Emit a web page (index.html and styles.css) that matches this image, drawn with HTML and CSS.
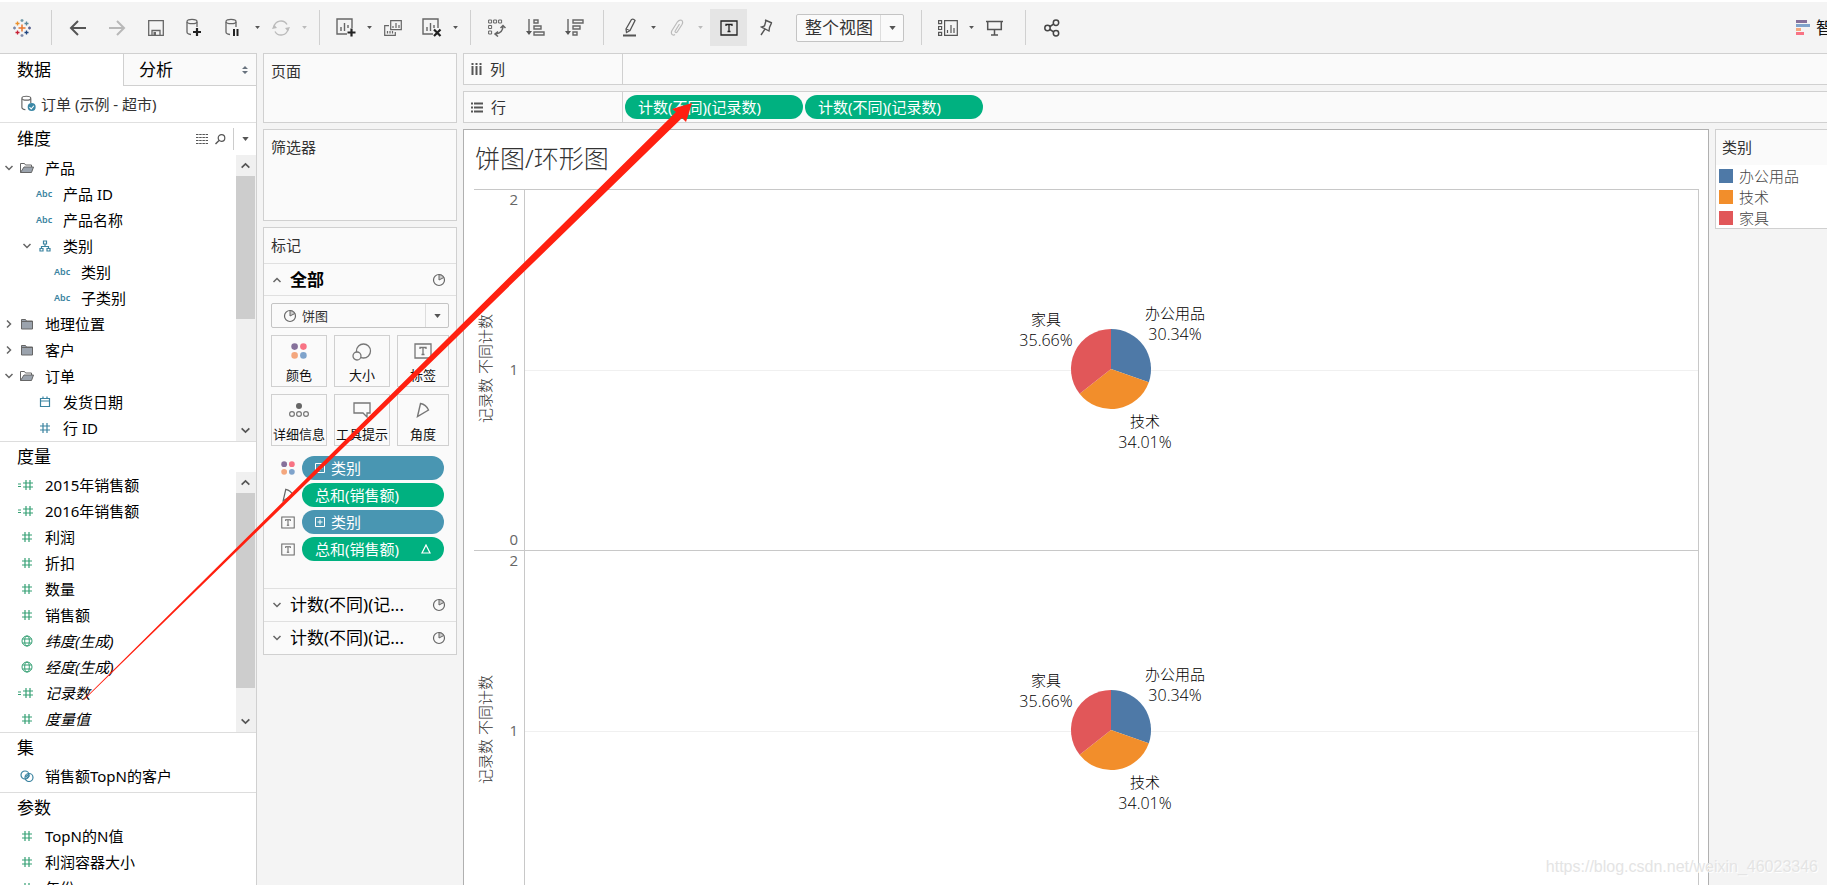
FILE: index.html
```html
<!DOCTYPE html>
<html lang="zh-CN">
<head>
<meta charset="utf-8">
<title>饼图/环形图</title>
<link rel="stylesheet" href="styles.css">
</head>
<body>
<svg class="defs" width="0" height="0" aria-hidden="true">
  <symbol id="caret" viewBox="0 0 8 5"><path d="M0 0h8L4 5z" fill="currentColor"/></symbol>
  <symbol id="down" viewBox="0 0 10 10"><path d="M1.500 3l3.500 3.500L8.500 3" fill="none" stroke="currentColor" stroke-width="1.500"/></symbol>
  <symbol id="up" viewBox="0 0 10 10"><path d="M1.500 7l3.500-3.500L8.500 7" fill="none" stroke="currentColor" stroke-width="1.500"/></symbol>
  <symbol id="right" viewBox="0 0 10 10"><path d="M3 1.500l3.500 3.500L3 8.500" fill="none" stroke="currentColor" stroke-width="1.500"/></symbol>
  <symbol id="folder" viewBox="0 0 14 12"><path d="M1.500 1.500h4l1 1.500h6v8h-11z" fill="#9ba3ad" stroke="#666"/><path d="M1.500 3.500h11" stroke="#666"/></symbol>
  <symbol id="folder-open" viewBox="0 0 16 12"><path d="M1.500 10.500V1.500h4l1 1.500h6v2" fill="none" stroke="#666"/><path d="M1.500 10.500L5 5h9.500l-2 5.500z" fill="#9ba3ad" stroke="#666"/></symbol>
  <symbol id="hash" viewBox="0 0 12 12"><path d="M4 1v10M8 1v10M1 4h10M1 8h10" fill="none" stroke="currentColor" stroke-width="1.200"/></symbol>
  <symbol id="calc-hash" viewBox="0 0 18 12"><path d="M8 1v10M12 1v10M5 4h10M5 8h10M0 5h3M0 7.500h3" fill="none" stroke="currentColor" stroke-width="1.200"/></symbol>
  <symbol id="globe" viewBox="0 0 12 12"><g fill="none" stroke="currentColor"><circle cx="6" cy="6" r="5"/><ellipse cx="6" cy="6" rx="2.300" ry="5"/><path d="M1.500 4h9M1.500 8h9"/></g></symbol>
  <symbol id="rings" viewBox="0 0 14 12"><g fill="none" stroke="currentColor" stroke-width="1.200"><circle cx="5" cy="5" r="4"/><circle cx="9" cy="7.500" r="4"/><path d="M5.500 7L9 4M6.500 8.500L9.500 5.500"/></g></symbol>
  <symbol id="calendar" viewBox="0 0 12 12"><path d="M1.500 2.500h9v8h-9zM1.500 5h9M4 .5v2.500M8 .5v2.500" fill="none" stroke="currentColor" stroke-width="1.200"/></symbol>
  <symbol id="tree" viewBox="0 0 12 12"><path d="M4.500 1h3v3h-3zM1 8.500h3V11H1zM8 8.500h3V11H8zM6 4v2.500M2.500 8.500v-2h7v2" fill="none" stroke="currentColor" stroke-width="1.200"/></symbol>
  <symbol id="pie" viewBox="0 0 14 14"><circle cx="7" cy="7" r="5.500" fill="none" stroke="#666" stroke-width="1.200"/><path d="M7 7V1.500A5.500 5.500 0 0 1 11.800 4.500z" fill="#ccc" stroke="#666"/></symbol>
  <symbol id="dots" viewBox="0 0 16 16"><circle cx="3.600" cy="3.600" r="3.300" fill="#86719b"/><circle cx="12.400" cy="3.600" r="3.300" fill="#f87384"/><circle cx="3.600" cy="12.400" r="3.300" fill="#f4a77e"/><circle cx="12.400" cy="12.400" r="3.300" fill="#7fa3cb"/></symbol>
  <symbol id="boxed-t" viewBox="0 0 18 16"><path d="M1 1h16v14H1z" fill="none" stroke="currentColor" stroke-width="1.300"/><path d="M6 6V4.500h6V6M9 4.500v7M7.500 11.500h3" fill="none" stroke="currentColor" stroke-width="1.300"/></symbol>
  <symbol id="angle" viewBox="0 0 14 16"><path d="M1.500 14.500L4.500 1.500Q10 2.500 12.500 8Z" fill="none" stroke="currentColor" stroke-width="1.400"/></symbol>
  <symbol id="plus-box" viewBox="0 0 10 10"><path d="M.5 .5h9v9h-9zM5 2.500v5M2.500 5h5" fill="none" stroke="currentColor"/></symbol>
  <symbol id="cylinder" viewBox="0 0 18 20"><path d="M1 4v10q0 2 4 2.500M11 4v5" fill="none" stroke="#666" stroke-width="1.300"/><ellipse cx="6" cy="3.500" rx="5" ry="2.200" fill="none" stroke="#666" stroke-width="1.300"/></symbol>
</svg>

<header class="toolbar">
  <div class="group brand">
    <svg width="18" height="18" viewBox="0 0 18 18" fill="none" stroke-width="1.300"><path d="M9 5.500v7M5.500 9h7" stroke="#e8762d" stroke-width="1.500"/><path d="M4.500 2.500v4M2.500 4.500h4" stroke="#eb912c"/><path d="M13.500 2.500v4M11.500 4.500h4" stroke="#59879b"/><path d="M4.500 11.500v4M2.500 13.500h4" stroke="#c72035"/><path d="M13.500 11.500v4M11.500 13.500h4" stroke="#1f447e"/><path d="M9 0v3M7.500 1.500h3" stroke="#7099a6"/><path d="M9 15v3M7.500 16.500h3M1.500 7.500v3M0 9h3" stroke="#7c88a8"/><path d="M16.500 7.500v3M15 9h3" stroke="#5b6591"/></svg>
  </div>
  <div class="group">
    <button class="tool" aria-label="后退"><svg width="18" height="16" viewBox="0 0 18 16"><path d="M17 8H2M9 1L2 8l7 7" fill="none" stroke="#555" stroke-width="2"/></svg></button>
    <button class="tool" aria-label="前进"><svg width="18" height="16" viewBox="0 0 18 16"><path d="M1 8h15M9 1l7 7-7 7" fill="none" stroke="#b8b8b8" stroke-width="2"/></svg></button>
    <button class="tool" aria-label="保存"><svg width="16" height="16" viewBox="0 0 16 16"><path d="M.7 .7h14.600v14.600H.7zM4 15v-4.500h8V15" fill="none" stroke="#666" stroke-width="1.300"/><path d="M5.500 12h2.500v3H5.500z" fill="#666"/></svg></button>
    <button class="tool" aria-label="新建数据源"><svg width="18" height="20" viewBox="0 0 18 20"><use href="#cylinder" width="18" height="20"/><path d="M11 10v8M7 14h8" stroke="#222" stroke-width="2.200"/></svg></button>
    <button class="tool" aria-label="暂停自动更新"><svg width="18" height="20" viewBox="0 0 18 20"><use href="#cylinder" width="18" height="20"/><path d="M9 11v7M12.500 11v7" stroke="#222" stroke-width="2"/></svg></button>
    <button class="more" aria-label="更新选项"><svg width="5" height="3"><use href="#caret"/></svg></button>
    <button class="tool faint" aria-label="刷新"><svg width="18" height="16" viewBox="0 0 18 16"><path d="M2 7A7 7 0 0 1 15 4.500M16 9A7 7 0 0 1 3 11.500" fill="none" stroke="currentColor" stroke-width="1.400"/><path d="M0 9l2-4.500L5 8zM18 7l-2 4.500L13 8z" fill="currentColor"/></svg></button>
    <button class="more faint" aria-label="刷新选项"><svg width="5" height="3"><use href="#caret"/></svg></button>
  </div>
  <div class="group">
    <button class="tool" aria-label="新建工作表"><svg width="20" height="19" viewBox="0 0 20 19"><path d="M11 16H1V1h15v9M5 13V9M8.500 13V5M12 10V7" fill="none" stroke="#666" stroke-width="1.400"/><path d="M15.500 10.500v8M11.500 14.500h8" stroke="#222" stroke-width="2.200"/></svg></button>
    <button class="more" aria-label="新建选项"><svg width="5" height="3"><use href="#caret"/></svg></button>
    <button class="tool" aria-label="复制工作表"><svg width="18" height="16" viewBox="0 0 18 16"><path d="M6.700 .7h10.600v9H6.700zM9 8V6M12 8V3M15 8V5M5 5.700H.7v9.600h10.600V12M3.500 13.500V11M6 13.500V11M8.500 13.500V11" fill="none" stroke="#666" stroke-width="1.200"/></svg></button>
    <button class="tool" aria-label="清除工作表"><svg width="20" height="19" viewBox="0 0 20 19"><path d="M11 16H1V1h15v9M5 13V9M8.500 13V5M12 10V7" fill="none" stroke="#666" stroke-width="1.400"/><path d="M12 11.500l6.500 6.500M18.500 11.500L12 18" stroke="#222" stroke-width="2.200"/></svg></button>
    <button class="more" aria-label="清除选项"><svg width="5" height="3"><use href="#caret"/></svg></button>
  </div>
  <div class="group sorts">
    <button class="tool" aria-label="交换行和列"><svg width="18" height="18" viewBox="0 0 18 18" fill="none" stroke="#666"><path d="M.6 1h3v3h-3zM5.600 1h3v3h-3zM10.600 1h3v3h-3zM.6 6.500h3v3h-3zM.6 12h3v3h-3z"/><path d="M15 7q0 7-7.500 8M12.500 9L15 6.500 17.500 9M10 12.500L7 15l3 2.500" stroke-width="1.500"/></svg></button>
    <button class="tool" aria-label="升序排序"><svg width="19" height="17" viewBox="0 0 19 17"><path d="M3 0v15M8 1h4v3H8zM8 7h7v3H8zM8 13h10v3H8z" fill="none" stroke="#666" stroke-width="1.400"/><path d="M0 12h6l-3 4z" fill="#555"/></svg></button>
    <button class="tool" aria-label="降序排序"><svg width="19" height="17" viewBox="0 0 19 17"><path d="M3 0v15M8 1h10v3H8zM8 7h7v3H8zM8 13h4v3H8z" fill="none" stroke="#666" stroke-width="1.400"/><path d="M0 12h6l-3 4z" fill="#555"/></svg></button>
  </div>
  <div class="group marks-tools">
    <button class="tool" aria-label="突出显示"><svg width="14" height="19" viewBox="0 0 14 19"><path d="M3 11L8.500 1.500q2-1 3.500 1L7 12.500l-3.500 2z" fill="none" stroke="#555" stroke-width="1.300"/><path d="M3 11l4 1.500" stroke="#555"/><path d="M0 17.500h13" stroke="#555" stroke-width="2"/></svg></button>
    <button class="more" aria-label="突出显示选项"><svg width="5" height="3"><use href="#caret"/></svg></button>
    <button class="tool faint" aria-label="组成员"><svg width="14" height="17" viewBox="0 0 14 17"><path d="M9.500 5L5.500 11.500Q4.500 13 5.800 13.500 6.800 13.800 7.500 12.500L12 5.500Q13.500 2.500 11.500 1.300 9.300 .3 7.500 2.800L2 11.500Q.5 14.500 2.500 15.800 3.800 16.500 5 15.500" fill="none" stroke="currentColor" stroke-width="1.200"/></svg></button>
    <button class="more faint" aria-label="组选项"><svg width="5" height="3"><use href="#caret"/></svg></button>
    <button class="tool pressed" aria-label="显示标记标签" aria-pressed="true"><svg width="18" height="16"><use href="#boxed-t"/></svg></button>
    <button class="tool" aria-label="固定轴"><svg width="13" height="17" viewBox="0 0 13 17"><path d="M5 1l7 3M6 1.500L4.500 7 1.500 8l7.500 4 .5-3.500L11.500 4M5 10l-4 6" fill="none" stroke="#555" stroke-width="1.400"/></svg></button>
    <div class="picker fit">
      <select aria-label="适合"><option>整个视图</option></select>
      <span class="picker-arrow"><svg width="7" height="4"><use href="#caret"/></svg></span>
    </div>
  </div>
  <div class="group">
    <button class="tool" aria-label="显示/隐藏卡"><svg width="20" height="16" viewBox="0 0 20 16"><path d="M.6 .6h3v3h-3zM.6 6.500h3v3h-3zM.6 12.400h3v3h-3zM6.600 .7h12.700v14.600H6.600zM9.500 13v-3M13 13V5M16 13V8" fill="none" stroke="#555" stroke-width="1.200"/></svg></button>
    <button class="more" aria-label="卡选项"><svg width="5" height="3"><use href="#caret"/></svg></button>
    <button class="tool" aria-label="演示模式"><svg width="17" height="16" viewBox="0 0 17 16"><path d="M0 1.500h17M1.700 2v7.500h13.600V2M8.500 9.500v5.500M5 15h7" fill="none" stroke="#555" stroke-width="1.500"/></svg></button>
  </div>
  <div class="group last">
    <button class="tool" aria-label="共享"><svg width="16" height="18" viewBox="0 0 16 18"><g fill="none" stroke="#444" stroke-width="1.500"><circle cx="3.500" cy="9" r="2.700"/><circle cx="12" cy="3.700" r="2.700"/><circle cx="12" cy="14.300" r="2.700"/><path d="M6 7.500l3.500-2.300M6 10.500l3.500 2.300"/></g></svg></button>
  </div>
  <button class="show-me"><svg width="14" height="16"><path fill="#86719b" d="M0 0h11v3H0z"/><path fill="#7fa3cb" d="M0 4h14v3H0z"/><path fill="#f4a77e" d="M0 8h5v3H0z"/><path fill="#f87384" d="M0 12h8v3H0z"/></svg>智能推荐</button>
</header>

<main class="workspace">
  <aside class="data-pane">
    <div class="tabs" role="tablist">
      <button class="tab active" role="tab" aria-selected="true">数据</button>
      <button class="tab" role="tab" aria-selected="false">分析<svg width="6" height="8"><path d="M0 3l3-3 3 3zM0 5h6L3 8z" fill="#68727e"/></svg></button>
    </div>
    <div class="source"><svg width="16" height="18" viewBox="0 0 18 20"><use href="#cylinder" width="18" height="20"/><circle cx="12" cy="13.500" r="4.500" fill="#3a87a5"/><path d="M9.500 13.500l2 2 3-3.500" fill="none" stroke="#fff" stroke-width="1.200"/></svg>订单 (示例 - 超市)</div>

    <section class="fields">
      <div class="fields-head tall"><h2>维度</h2>
        <button class="mini" aria-label="查看数据"><svg width="12" height="10" viewBox="0 0 12 10"><path d="M0 .5h12M0 3.500h12M0 6.500h12M0 9.500h12" stroke="#555" stroke-dasharray="2.500 .7"/></svg></button>
        <button class="mini" aria-label="查找字段"><svg width="11" height="11"><circle cx="6.500" cy="4" r="3.300" fill="none" stroke="#555" stroke-width="1.200"/><path d="M4 6.500L.5 10" stroke="#555" stroke-width="1.500"/></svg></button>
        <button class="mini menu" aria-label="菜单"><svg width="7" height="4"><use href="#caret"/></svg></button>
      </div>
      <div class="scroller">
        <ul class="list dim">
          <li><svg class="fold"><use href="#down"/></svg><svg class="icon"><use href="#folder-open"/></svg>产品</li>
          <li class="l1"><span class="abc">Abc</span>产品 ID</li>
          <li class="l1"><span class="abc">Abc</span>产品名称</li>
          <li class="l1"><svg class="fold"><use href="#down"/></svg><svg class="icon"><use href="#tree"/></svg>类别</li>
          <li class="l2"><span class="abc">Abc</span>类别</li>
          <li class="l2"><span class="abc">Abc</span>子类别</li>
          <li><svg class="fold"><use href="#right"/></svg><svg class="icon"><use href="#folder"/></svg>地理位置</li>
          <li><svg class="fold"><use href="#right"/></svg><svg class="icon"><use href="#folder"/></svg>客户</li>
          <li><svg class="fold"><use href="#down"/></svg><svg class="icon"><use href="#folder-open"/></svg>订单</li>
          <li class="l1"><svg class="icon"><use href="#calendar"/></svg>发货日期</li>
          <li class="l1"><svg class="icon"><use href="#hash"/></svg>行 ID</li>
        </ul>
        <div class="scrollbar"><svg viewBox="0 0 10 10"><use href="#up"/></svg><span class="thumb half"></span><svg viewBox="0 0 10 10"><use href="#down"/></svg></div>
      </div>
    </section>

    <section class="fields">
      <div class="fields-head"><h2>度量</h2></div>
      <div class="scroller">
        <ul class="list measure">
          <li><svg class="icon"><use href="#calc-hash"/></svg>2015年销售额</li>
          <li><svg class="icon"><use href="#calc-hash"/></svg>2016年销售额</li>
          <li><svg class="icon"><use href="#hash"/></svg>利润</li>
          <li><svg class="icon"><use href="#hash"/></svg>折扣</li>
          <li><svg class="icon"><use href="#hash"/></svg>数量</li>
          <li><svg class="icon"><use href="#hash"/></svg>销售额</li>
          <li class="generated"><svg class="icon"><use href="#globe"/></svg>纬度(生成)</li>
          <li class="generated"><svg class="icon"><use href="#globe"/></svg>经度(生成)</li>
          <li class="generated"><svg class="icon"><use href="#calc-hash"/></svg>记录数</li>
          <li class="generated"><svg class="icon"><use href="#hash"/></svg>度量值</li>
        </ul>
        <div class="scrollbar"><svg viewBox="0 0 10 10"><use href="#up"/></svg><span class="thumb most"></span><svg viewBox="0 0 10 10"><use href="#down"/></svg></div>
      </div>
    </section>

    <section class="fields sets">
      <div class="fields-head"><h2>集</h2></div>
      <ul class="list dim"><li><svg class="icon"><use href="#rings"/></svg>销售额TopN的客户</li></ul>
    </section>

    <section class="fields">
      <div class="fields-head"><h2>参数</h2></div>
      <ul class="list measure">
        <li><svg class="icon"><use href="#hash"/></svg>TopN的N值</li>
        <li><svg class="icon"><use href="#hash"/></svg>利润容器大小</li>
        <li><svg class="icon"><use href="#hash"/></svg>年份</li>
      </ul>
    </section>
  </aside>

  <div class="cards">
    <section class="card pages"><h3>页面</h3></section>
    <section class="card filters"><h3>筛选器</h3></section>
    <section class="card marks">
      <h3>标记</h3>
      <button class="layer open"><svg class="fold"><use href="#up"/></svg><span>全部</span><svg class="pie-icon"><use href="#pie"/></svg></button>
      <div class="marks-body">
        <div class="picker mark-type">
          <svg class="pie-icon"><use href="#pie"/></svg>
          <select aria-label="标记类型"><option>饼图</option></select>
          <span class="picker-arrow"><svg width="7" height="4"><use href="#caret"/></svg></span>
        </div>
        <div class="props">
          <button><svg width="16" height="16"><use href="#dots"/></svg>颜色</button>
          <button><svg width="20" height="18" viewBox="0 0 20 18"><g fill="none" stroke="#777" stroke-width="1.300"><circle cx="11.500" cy="8" r="7"/><circle cx="5" cy="13" r="4" fill="#fafafa"/></g></svg>大小</button>
          <button><svg width="18" height="16"><use href="#boxed-t"/></svg>标签</button>
          <button><svg width="20" height="16" viewBox="0 0 20 16"><circle cx="10" cy="4" r="3" fill="#666"/><g fill="none" stroke="#777" stroke-width="1.200"><circle cx="3" cy="12" r="2.400"/><circle cx="10" cy="12" r="2.400"/><circle cx="17" cy="12" r="2.400"/></g></svg>详细信息</button>
          <button><svg width="18" height="16" viewBox="0 0 18 16"><path d="M1 1h16v10h-3v4l-4-4H1z" fill="none" stroke="#777" stroke-width="1.300"/></svg>工具提示</button>
          <button><svg width="14" height="16"><use href="#angle"/></svg>角度</button>
        </div>
        <ul class="encodings">
          <li><svg width="14" height="14"><use href="#dots"/></svg><span class="pill blue"><svg width="10" height="10"><use href="#plus-box"/></svg>类别</span></li>
          <li><svg width="14" height="14"><use href="#angle"/></svg><span class="pill">总和(销售额)</span></li>
          <li><svg width="14" height="13"><use href="#boxed-t"/></svg><span class="pill blue"><svg width="10" height="10"><use href="#plus-box"/></svg>类别</span></li>
          <li><svg width="14" height="13"><use href="#boxed-t"/></svg><span class="pill">总和(销售额)<svg class="delta" width="10" height="10"><path d="M5 1l4 8H1z" fill="none" stroke="#fff" stroke-width="1.200"/></svg></span></li>
        </ul>
      </div>
      <button class="layer"><svg class="fold"><use href="#down"/></svg><span>计数(不同)(记...</span><svg class="pie-icon"><use href="#pie"/></svg></button>
      <button class="layer"><svg class="fold"><use href="#down"/></svg><span>计数(不同)(记...</span><svg class="pie-icon"><use href="#pie"/></svg></button>
    </section>
  </div>

  <div class="canvas">
    <div class="shelf"><div class="shelf-name"><svg width="11" height="12"><path d="M1.500 0v2M5.500 0v2M9.500 0v2M1.500 3v9M5.500 3v9M9.500 3v9" stroke="#555" stroke-width="2"/></svg>列</div></div>
    <div class="shelf"><div class="shelf-name"><svg width="12" height="11"><path d="M0 1.500h2M0 5.500h2M0 9.500h2M3 1.500h9M3 5.500h9M3 9.500h9" stroke="#555" stroke-width="2"/></svg>行</div>
      <div class="shelf-pills"><span class="pill">计数(不同)(记录数)</span><span class="pill">计数(不同)(记录数)</span></div></div>
    <div class="view">
      <section class="sheet">
        <h1>饼图/环形图</h1>
        <div class="panes">
          <div class="pane">
            <div class="axis"><span class="axis-title">记录数 不同计数</span><div class="ticks"><span>2</span><span>1</span><span>0</span></div></div>
            <div class="plot">
              <svg width="240" height="180" viewBox="0 0 240 180"><g id="pie-mark"><path d="M119 89V49A40 40 0 0 1 156.800 102.200z" fill="#4e79a7"/><path d="M119 89L156.800 102.200A40 40 0 0 1 87.600 113.800z" fill="#f28e2b"/><path d="M119 89L87.600 113.800A40 40 0 0 1 119 49z" fill="#e15759"/></g>
              <g class="mark-labels"><text x="183" y="39">办公用品</text><text class="pct" x="183" y="60">30.34%</text><text x="153" y="147">技术</text><text class="pct" x="153" y="168">34.01%</text><text x="54" y="45">家具</text><text class="pct" x="54" y="66">35.66%</text></g></svg>
            </div>
          </div>
          <div class="pane">
            <div class="axis"><span class="axis-title">记录数 不同计数</span><div class="ticks"><span>2</span><span>1</span><span>0</span></div></div>
            <div class="plot">
              <svg width="240" height="180" viewBox="0 0 240 180"><use href="#pie-mark"/>
              <g class="mark-labels"><text x="183" y="39">办公用品</text><text class="pct" x="183" y="60">30.34%</text><text x="153" y="147">技术</text><text class="pct" x="153" y="168">34.01%</text><text x="54" y="45">家具</text><text class="pct" x="54" y="66">35.66%</text></g></svg>
            </div>
          </div>
        </div>
      </section>
      <aside class="legend">
        <h3>类别</h3>
        <ul><li><i class="office"></i>办公用品</li><li><i class="tech"></i>技术</li><li><i class="home"></i>家具</li></ul>
      </aside>
    </div>
  </div>
</main>

<svg class="arrow" width="720" height="720" viewBox="0 0 720 720" aria-hidden="true"><path d="M83 700L676 112 672 109 692 103 686 122 682 118 84 700z" fill="#ff2010"/></svg>
<div class="watermark">https://blog.csdn.net/weixin_46023346</div>
</body>
</html>
```
FILE: styles.css
```css
* { box-sizing: border-box; }
body {
  margin: 0;
  height: 100vh;
  overflow: hidden;
  position: relative;
  display: flex;
  flex-direction: column;
  background: #f4f4f4;
  color: #333;
  font: 15px/20px "Noto Sans", "Noto Sans CJK SC", sans-serif;
}
h1, h2, h3, ul { margin: 0; padding: 0; font-weight: 400; }
ul { list-style: none; }
button { padding: 0; border: 0; background: none; color: inherit; font: inherit; }
svg { flex: none; display: block; }
.defs { position: absolute; }

.toolbar { flex: none; display: flex; align-items: center; height: 53px; border-top: 2px solid #fff; color: #555; }
.group { display: flex; align-items: center; height: 35px; padding: 0 11px 0 6px; border-right: 1px solid #d0d0d0; }
.group.brand { width: 52px; padding: 0 0 0 13px; }
.group.sorts { padding-right: 9px; }
.group.marks-tools { padding-right: 17px; }
.group.last { border: 0; }
.tool { width: 39px; height: 37px; display: flex; align-items: center; justify-content: center; }
.more { width: 8px; height: 37px; display: flex; align-items: center; justify-content: center; }
.faint { color: #bbb; }
.pressed { width: 37px; margin-left: 6px; background: #e5e5e5; color: #222; }
.picker { display: flex; align-items: center; position: relative; border: 1px solid #c4c4c4; border-radius: 2px; background: #fafafa; }
.picker select { appearance: none; flex: 1; min-width: 0; height: 100%; padding: 0; border: 0; background: none; color: #333; font: inherit; }
.picker-arrow { display: flex; align-items: center; justify-content: center; width: 23px; height: 100%; border-left: 1px solid #ddd; color: #555; pointer-events: none; }
.fit { width: 108px; height: 28px; margin-left: 10px; font-size: 17px; line-height: 24px; }
.fit select { padding-left: 8px; }
.show-me { flex: none; display: flex; align-items: center; gap: 6px; width: 31px; margin-left: auto; overflow: hidden; white-space: nowrap; color: #111; font-size: 17px; }

.workspace { flex: 1; min-height: 0; display: flex; gap: 6px; }
.data-pane { flex: none; width: 257px; overflow: hidden; background: #fff; border-right: 1px solid #d0d0d0; border-top: 1px solid #d0d0d0; color: #000; }
.tabs { display: flex; height: 32px; }
.tab { width: 123px; padding-left: 17px; text-align: left; font-size: 17px; }
.tab:not(.active) { flex: 1; display: flex; align-items: center; justify-content: space-between; padding: 0 8px 0 15px; background: #fafafa; border: solid #d0d0d0; border-width: 0 0 1px 1px; }
.source { display: flex; align-items: center; gap: 4px; height: 37px; padding-left: 21px; border-bottom: 1px solid #e0e0e0; color: #333; }
.fields { border-bottom: 1px solid #ddd; }
.sets { padding-bottom: 3px; }
.fields-head { display: flex; align-items: center; height: 30px; padding-left: 17px; }
.fields-head.tall { height: 32px; }
.fields-head h2 { flex: 1; font-size: 17px; }
.mini { display: flex; align-items: center; justify-content: center; width: 19px; height: 22px; }
.mini.menu { width: 23px; margin-left: 3px; border-left: 1px solid #ccc; color: #555; }
.scroller { display: flex; }
.list { flex: 1; }
.list li { display: flex; align-items: center; height: 26px; padding-left: 18px; white-space: nowrap; }
.list .l1 { padding-left: 36px; }
.list .l2 { padding-left: 54px; }
.list .icon { width: 18px; height: 12px; margin-right: 9px; }
.fold { width: 10px; height: 10px; color: #666; }
.list .fold { margin: 0 4px 0 -14px; }
.dim { color: #000; }
.dim .icon, .abc { color: #3a83a0; }
.measure .icon { color: #35a074; }
.abc { width: 27px; font: 600 9px/20px "Noto Sans", sans-serif; }
.generated { font-style: italic; }
.scrollbar { flex: none; display: flex; flex-direction: column; align-items: center; width: 20px; padding-right: 1px; background: #f0f0f0; color: #555; }
.scrollbar svg { width: 19px; height: 21px; padding: 4px; }
.thumb { width: 100%; background: #cdcdcd; }
.thumb.half { height: 50%; }
.thumb.most { height: 75%; }
.scrollbar svg:last-child { margin-top: auto; }

.cards { flex: none; width: 194px; display: flex; flex-direction: column; gap: 6px; }
.card { background: #fafafa; border: 1px solid #d0d0d0; }
.card h3 { padding: 7px 7px; font-size: 15px; line-height: 21px; }
.pages { height: 70px; }
.filters { height: 92px; }
.layer { display: flex; align-items: center; width: 100%; height: 33px; padding: 0 10px 0 8px; border-top: 1px solid #e0e0e0; color: #000; font-size: 17px; text-align: left; }
.layer.open { height: 32px; font-weight: 700; }
.layer span { flex: 1; margin-left: 8px; }
.pie-icon { width: 14px; height: 14px; }
.marks-body { padding: 7px 7px 27px; border-top: 1px solid #e0e0e0; }
.mark-type { height: 25px; padding-left: 11px; gap: 5px; font-size: 13px; }
.props { display: grid; grid-template-columns: 56fr 56fr 52fr; gap: 7px; margin: 7px 0 10px; }
.props button { display: flex; flex-direction: column; align-items: center; justify-content: space-between; min-width: 0; height: 52px; padding: 7px 0 1px; border: 1px solid #d0d0d0; color: #111; font-size: 13px; line-height: 20px; white-space: nowrap; }
.props svg { color: #777; }
.encodings { display: grid; gap: 3px; padding: 0 5px 0 10px; }
.encodings li { display: flex; align-items: center; gap: 7px; color: #666; }
.pill { display: flex; align-items: center; gap: 6px; flex: 1; height: 24px; padding: 0 13px; border-radius: 12px; background: #00b180; color: #fff; white-space: nowrap; }
.pill.blue { background: #4996b2; }
.delta { margin-left: auto; }

.canvas { flex: 1; min-width: 0; display: flex; flex-direction: column; gap: 6px; }
.shelf { flex: none; display: flex; height: 32px; background: #fafafa; border: 1px solid #d0d0d0; border-right: 0; }
.shelf-name { display: flex; align-items: center; gap: 8px; width: 159px; padding-left: 7px; border-right: 1px solid #d0d0d0; }
.shelf-pills { display: flex; align-items: center; gap: 2px; padding-left: 2px; }
.shelf .pill { flex: none; width: 178px; }
.view { flex: 1; min-height: 0; display: flex; align-items: flex-start; gap: 6px; }
.sheet { flex: 1; height: 100%; padding: 0 9px 0 10px; overflow: hidden; background: #fff; border: solid #b0b0b0; border-width: 1px 1px 0; }
.sheet h1 { height: 59px; padding-left: 1px; color: #333; font-size: 25px; line-height: 56px; font-weight: 300; }
.panes { border-right: 1px solid #c8c8c8; }
.pane { display: flex; height: 361px; border-top: 1px solid #c8c8c8; }
.axis { display: flex; align-items: center; width: 51px; padding: 0 6px 0 0; border-right: 1px solid #c8c8c8; color: #666; }
.axis-title { width: 22px; padding-top: 4px; writing-mode: vertical-rl; text-orientation: sideways; transform: rotate(180deg); color: #333; line-height: 22px; text-align: center; font-weight: 300; }
.ticks { flex: 1; height: 100%; display: flex; flex-direction: column; justify-content: space-between; padding-bottom: 1px; text-align: right; line-height: 19px; font-family: "Open Sans", sans-serif; }
.plot { flex: 1; display: flex; align-items: center; justify-content: center; background: linear-gradient(#f0f0f0, #f0f0f0) center / 100% 1px no-repeat; }
.mark-labels { fill: #000; text-anchor: middle; font-family: "Open Sans", "Noto Sans CJK SC", sans-serif; font-weight: 300; }
.pct { font-size: 16px; }
.legend { flex: none; width: 112px; background: #fff; border: 1px solid #d0d0d0; border-right: 0; }
.legend h3 { height: 35px; padding: 7px 6px; background: #fafafa; font-size: 15px; }
.legend ul { padding: 0 3px; color: #444; font-weight: 300; }
.legend li { display: flex; align-items: center; gap: 6px; height: 21px; }
.legend i { width: 14px; height: 14px; }
.office { background: #4e79a7; }
.tech { background: #f28e2b; }
.home { background: #e15759; }

.arrow { position: absolute; left: 0; top: 0; pointer-events: none; }
.watermark { position: absolute; right: 9px; bottom: 8px; color: #e4e4e4; font: 16px/20px "Liberation Sans", Arial, sans-serif; text-shadow: 1px 1px 0 #fff; pointer-events: none; }
```
